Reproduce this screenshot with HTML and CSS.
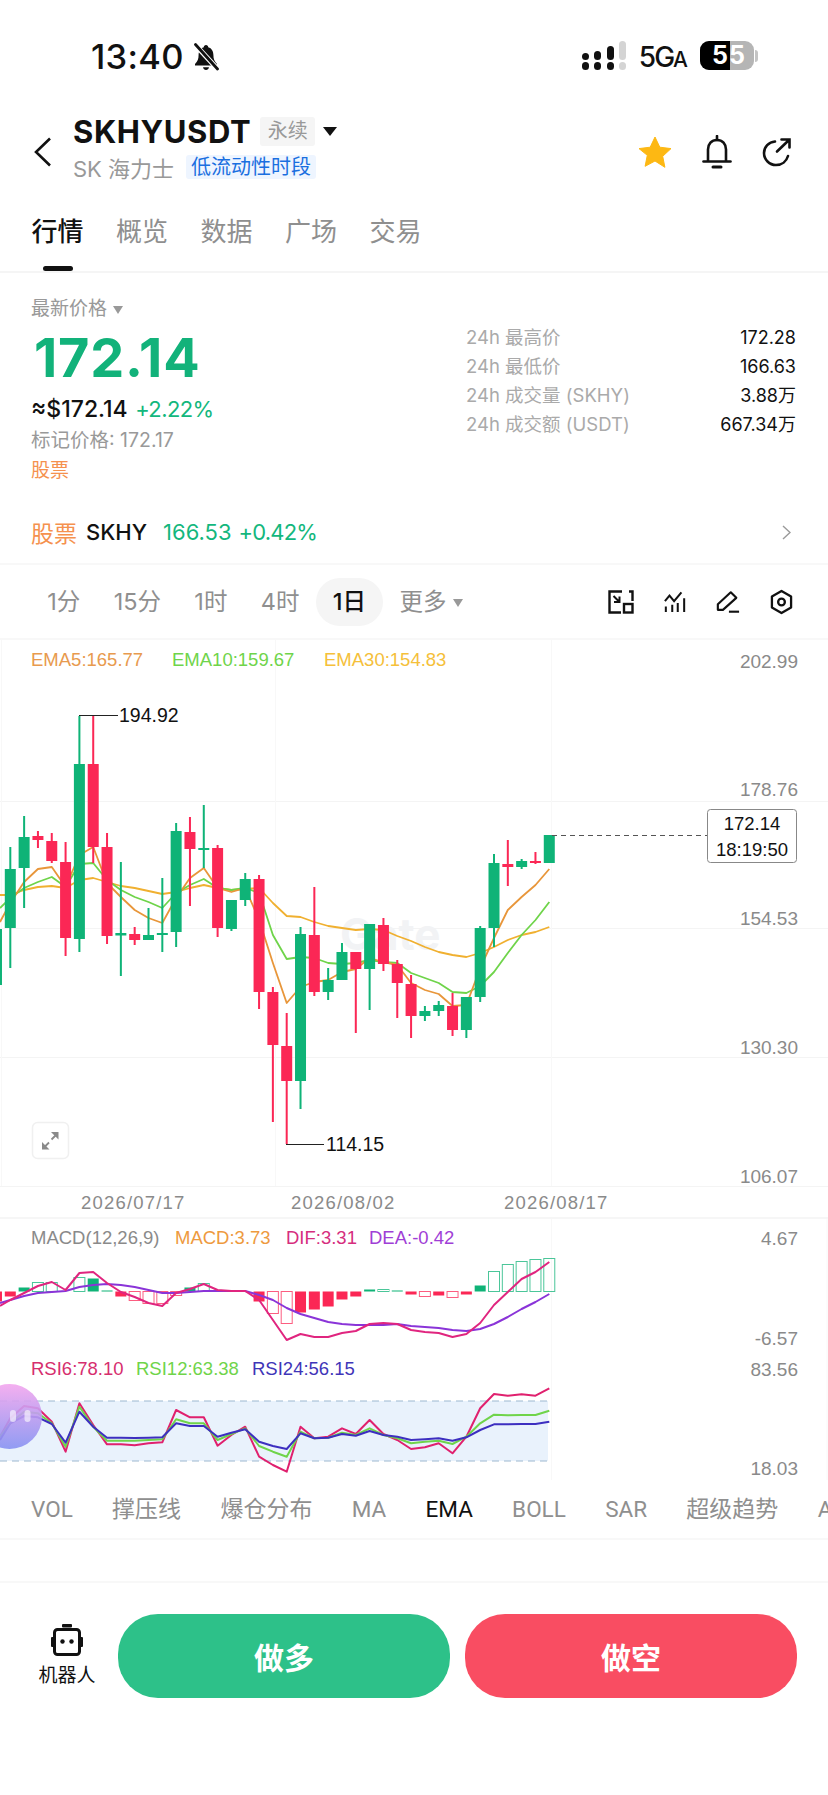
FILE: index.html
```html
<!DOCTYPE html>
<html lang="zh-CN">
<head>
    <meta charset="UTF-8">
    <meta name="viewport" content="width=device-width, initial-scale=1.0">
    <title>SKHYUSDT</title>
    <link rel="stylesheet" href="styles.css">
</head>
<body>
    <div class="status-bar">
        <div class="status-left">
            <span class="clock">13:40</span>
            <svg class="bell-off" viewBox="0 0 28 28" width="28" height="28">
                <path d="M14 2c-1.4 0-2.2 1-2.2 2.2C8.200 5.200 6.600 8.300 6.600 12c0 4-1 6-3.600 9v1.500h22V21c-2.600-3-3.600-5-3.600-9 0-3.700-1.600-6.800-5.200-7.800C16.200 3 15.400 2 14 2z" fill="#111"/>
                <path d="M11 24.200h6c-.4 1.700-1.500 2.800-3 2.800s-2.600-1.100-3-2.800z" fill="#111"/>
                <path d="M3 1.500 26 26.500" stroke="#fff" stroke-width="5"/>
                <path d="M3.500 1.500 25.500 26" stroke="#111" stroke-width="2.800" stroke-linecap="round"/>
            </svg>
        </div>
        <div class="status-right">
            <svg viewBox="0 0 44 29" width="44" height="29">
                <rect x="0" y="12" width="7" height="7" rx="3.500" fill="#111"/>
                <rect x="0" y="21" width="7" height="8" rx="3.500" fill="#111"/>
                <rect x="12" y="10" width="7" height="9" rx="3.500" fill="#111"/>
                <rect x="12" y="21" width="7" height="8" rx="3.500" fill="#111"/>
                <rect x="25" y="5" width="7" height="14" rx="3.500" fill="#111"/>
                <rect x="25" y="21" width="7" height="8" rx="3.500" fill="#111"/>
                <rect x="37" y="0" width="7" height="19" rx="3.500" fill="#d4d4d4"/>
                <rect x="37" y="21" width="7" height="8" rx="3.500" fill="#d4d4d4"/>
            </svg>
            <span class="network">5G<small>A</small></span>
            <div class="battery">
                <div class="battery-level"></div>
                <span class="battery-text">55</span>
            </div>
            <div class="battery-nub"></div>
        </div>
    </div>

    <div class="header">
        <svg class="back" viewBox="0 0 18 30" width="18" height="30">
            <path d="M16 1.500 2 15l14 13.500" fill="none" stroke="#111" stroke-width="2.600"/>
        </svg>
        <div class="symbol">
            <div class="symbol-top">
                <span class="symbol-name">SKHYUSDT</span>
                <span class="perp">永续</span>
                <span class="symbol-caret"></span>
            </div>
            <div class="symbol-sub">
                <span class="symbol-cn">SK 海力士</span>
                <span class="liquidity">低流动性时段</span>
            </div>
        </div>
        <div class="header-icons">
            <svg viewBox="0 0 34 32" width="34" height="32">
                <path d="M17 1l4.800 10.200 11.200 1.400-8.300 7.700 2.200 11L17 25l-9.900 5.300 2.200-11L1 12.600l11.200-1.400z" fill="#fdb813" stroke="#fdb813" stroke-linejoin="round"/>
            </svg>
            <svg viewBox="0 0 30 34" width="30" height="34">
                <path d="M6 26V14.500C6 9 9.500 5 15 5s9 4 9 9.500V26" fill="none" stroke="#111" stroke-width="2.600"/>
                <path d="M1.500 26.500h27" stroke="#111" stroke-width="2.600" stroke-linecap="round"/>
                <path d="M15 1v4" stroke="#111" stroke-width="2.600" stroke-linecap="round"/>
                <path d="M11 32h8" stroke="#111" stroke-width="3" stroke-linecap="round"/>
            </svg>
            <svg viewBox="0 0 30 30" width="30" height="30">
                <path d="M13 4.500C6.800 5 2 9.700 2 16c0 6.600 5.400 12 12 12 5.900 0 10.500-3.800 12-9" fill="none" stroke="#111" stroke-width="2.600" stroke-linecap="round"/>
                <path d="M15 14.500 27 3M19.500 2.500H27.500V10.500" fill="none" stroke="#111" stroke-width="2.600" stroke-linecap="round"/>
            </svg>
        </div>
    </div>

    <div class="tabs">
        <span class="tab active">行情</span>
        <span class="tab">概览</span>
        <span class="tab">数据</span>
        <span class="tab">广场</span>
        <span class="tab">交易</span>
    </div>

    <div class="ticker">
        <div class="ticker-left">
            <div class="last-label">最新价格<span class="small-caret"></span></div>
            <div class="last-price">172.14</div>
            <div class="fiat-row">
                <span class="fiat">≈$172.14</span>
                <span class="change">+2.22%</span>
            </div>
            <div class="mark">标记价格: 172.17</div>
            <div class="stock-tag">股票</div>
        </div>
        <div class="ticker-right">
            <div class="stat-row"><span>24h 最高价</span><b>172.28</b></div>
            <div class="stat-row"><span>24h 最低价</span><b>166.63</b></div>
            <div class="stat-row"><span>24h 成交量 (SKHY)</span><b>3.88万</b></div>
            <div class="stat-row"><span>24h 成交额 (USDT)</span><b>667.34万</b></div>
        </div>
    </div>

    <div class="related">
        <span class="related-tag">股票</span>
        <span class="related-name">SKHY</span>
        <span class="related-price">166.53</span>
        <span class="related-change">+0.42%</span>
        <svg class="related-arrow" viewBox="0 0 9 15" width="9" height="15">
            <path d="M1 1l7 6.500L1 14" fill="none" stroke="#9a9a9a" stroke-width="1.400"/>
        </svg>
    </div>

    <div class="intervals">
        <span class="interval">1分</span>
        <span class="interval">15分</span>
        <span class="interval">1时</span>
        <span class="interval">4时</span>
        <span class="interval active">1日</span>
        <span class="interval">更多<span class="small-caret"></span></span>
        <div class="tools">
            <svg viewBox="0 0 26 24" width="26" height="24">
                <path d="M14 1.500H1.500v21H13M21 1.500h3.500V11" fill="none" stroke="#111" stroke-width="2.400"/>
                <path d="M5.500 6l6 6M11.500 6.500V12H6" fill="none" stroke="#111" stroke-width="2"/>
                <rect x="16" y="14" width="8.500" height="8.500" fill="none" stroke="#111" stroke-width="2.400"/>
            </svg>
            <svg viewBox="0 0 24 24" width="22" height="24">
                <path d="M1 11 6 5l5 6L19 1.500" fill="none" stroke="#111" stroke-width="2.200"/>
                <path d="M2 17v6M9 15v8M15 13v10M22 8v15" stroke="#111" stroke-width="2.200"/>
            </svg>
            <svg viewBox="0 0 26 24" width="24" height="24">
                <path d="M16 1.500l6 6L7.500 20.500H2v-6z" fill="none" stroke="#111" stroke-width="2.300" stroke-linejoin="round"/>
                <path d="M14 22.500h11" stroke="#111" stroke-width="2.300"/>
            </svg>
            <svg viewBox="0 0 24 26" width="23" height="26">
                <path d="M12 1.500l10 5.700v11.600l-10 5.700-10-5.700V7.200z" fill="none" stroke="#111" stroke-width="2.400" stroke-linejoin="round"/>
                <circle cx="12" cy="13" r="3.500" fill="none" stroke="#111" stroke-width="2.400"/>
            </svg>
        </div>
    </div>

    <svg class="chart" viewBox="0 640 828 850" width="828" height="850">
        <defs>
            <linearGradient id="bubble" x1="0" y1="0" x2="0" y2="1">
                <stop offset="0" stop-color="#f3a6ee"/>
                <stop offset="1" stop-color="#8792f2"/>
            </linearGradient>
        </defs>

        <g class="grid">
            <path d="M0 801.500H828M0 928.500H828M0 1057.500H828M0 1186.500H828"/>
            <path class="grid-v" d="M1.500 640V1186M275.500 640V1186M551.500 640V1186M551.500 1218V1480M827 1218V1480"/>
        </g>
        <text class="watermark" x="340" y="950">Gate</text>

        <g id="emaLines"></g>
        <g id="candles"></g>

        <text class="legend ema5" x="31" y="666">EMA5:165.77</text>
        <text class="legend ema10" x="172" y="666">EMA10:159.67</text>
        <text class="legend ema30" x="324" y="666">EMA30:154.83</text>

        <path class="marker-line" d="M79 715.500H118M286 1144.500H324"/>
        <text class="marker" x="119" y="722">194.92</text>
        <text class="marker" x="326" y="1151">114.15</text>

        <path class="price-line" d="M552 835.500H707"/>
        <rect class="price-box" x="707.500" y="809.500" width="89" height="53" rx="3"/>
        <text class="price-box-text" x="752" y="830">172.14</text>
        <text class="price-box-text" x="752" y="856">18:19:50</text>

        <text class="axis" x="798" y="668">202.99</text>
        <text class="axis" x="798" y="796">178.76</text>
        <text class="axis" x="798" y="925">154.53</text>
        <text class="axis" x="798" y="1054">130.30</text>
        <text class="axis" x="798" y="1183">106.07</text>

        <rect class="expand" x="32.500" y="1122.500" width="36" height="36" rx="5"/>
        <path class="expand-icon" d="M42 1149.500v-7.500l7.500 7.500zM58.500 1132v7.500l-7.500-7.500z"/>
        <path class="expand-line" d="M44 1147.500l5-5M51.500 1139.500l5-5"/>

        <text class="date" x="81" y="1209">2026/07/17</text>
        <text class="date" x="291" y="1209">2026/08/02</text>
        <text class="date" x="504" y="1209">2026/08/17</text>
        <rect class="band-line" x="0" y="1217" width="828" height="2"/>

        <text class="legend macd-name" x="31" y="1244">MACD(12,26,9)</text>
        <text class="legend macd-val" x="175" y="1244">MACD:3.73</text>
        <text class="legend dif" x="286" y="1244">DIF:3.31</text>
        <text class="legend dea" x="369" y="1244">DEA:-0.42</text>
        <g id="macd"></g>

        <text class="legend rsi6" x="31" y="1375">RSI6:78.10</text>
        <text class="legend rsi12" x="136" y="1375">RSI12:63.38</text>
        <text class="legend rsi24" x="252" y="1375">RSI24:56.15</text>
        <rect class="rsi-band" x="0" y="1401" width="548" height="60"/>
        <path class="rsi-dash" d="M0 1401H548M0 1461H548"/>
        <g id="rsi"></g>

        <text class="axis" x="798" y="1245">4.67</text>
        <text class="axis" x="798" y="1345">-6.57</text>
        <text class="axis" x="798" y="1376">83.56</text>
        <text class="axis" x="798" y="1475">18.03</text>

        <circle class="bubble" cx="9.500" cy="1416.500" r="32.500"/>
        <rect class="bubble-bar" x="10" y="1410" width="6" height="12" rx="3"/>
        <rect class="bubble-bar" x="24.500" y="1410" width="6" height="12" rx="3"/>
    </svg>

    <div class="indicators">
        <span>VOL</span>
        <span class="cn">撑压线</span>
        <span class="cn">爆仓分布</span>
        <span>MA</span>
        <span class="active">EMA</span>
        <span>BOLL</span>
        <span>SAR</span>
        <span class="cn">超级趋势</span>
        <span>A</span>
    </div>

    <div class="spacer"></div>

    <div class="actions">
        <div class="robot">
            <svg viewBox="0 0 32 32" width="32" height="32">
                <rect x="11" y="0" width="10" height="3.500" rx="1" fill="#111"/>
                <rect x="3.500" y="5.500" width="25" height="25" rx="3" fill="none" stroke="#111" stroke-width="3"/>
                <rect x="0" y="13" width="3" height="10" rx="1" fill="#111"/>
                <rect x="29" y="13" width="3" height="10" rx="1" fill="#111"/>
                <circle cx="11.500" cy="17.500" r="2.200" fill="#111"/>
                <circle cx="20.500" cy="17.500" r="2.200" fill="#111"/>
            </svg>
            <span>机器人</span>
        </div>
        <button class="trade long">做多</button>
        <button class="trade short">做空</button>
    </div>

    <script src="chart.js"></script>
</body>
</html>
```

FILE: styles.css
```css
* {
    box-sizing: border-box;
}

body {
    margin: 0;
    width: 828px;
    height: 1795px;
    overflow: hidden;
    background-color: #fff;
    color: #111;
    font-family: "Inter", "Noto Sans CJK SC", sans-serif;
}

.status-bar {
    display: flex;
    justify-content: space-between;
    height: 108px;
    padding: 41px 70px 0 91px;
}

.status-left {
    display: flex;
    align-items: flex-start;
    gap: 8px;
}

.clock {
    font-size: 34.500px;
    font-weight: 500;
    line-height: 32px;
    letter-spacing: 0.300px;
}

.bell-off {
    margin-top: 2px;
}

.status-right {
    display: flex;
    align-items: flex-start;
    position: relative;
}

.network {
    margin-left: 13px;
    font-size: 28px;
    font-weight: 500;
    line-height: 32px;
    letter-spacing: -2px;
}

.network small {
    font-size: 21px;
}

.battery {
    position: relative;
    width: 54px;
    height: 29px;
    margin-left: 14px;
    border-radius: 9px;
    background-color: #b5b5b5;
    overflow: hidden;
}

.battery-level {
    width: 30px;
    height: 29px;
    background-color: #000;
}

.battery-text {
    position: absolute;
    left: 12px;
    top: 0;
    font-size: 25px;
    font-weight: 700;
    line-height: 29px;
    color: #fff;
    letter-spacing: 1px;
}

.battery-nub {
    width: 3px;
    height: 12px;
    margin: 9px 0 0 1px;
    border-radius: 0 3px 3px 0;
    background-color: #c4c4c4;
}

.header {
    display: flex;
    align-items: center;
    height: 78px;
    padding: 0 36px 0 34px;
}

.back {
    margin-top: 10px;
}

.symbol {
    margin-left: 21px;
}

.symbol-top {
    display: flex;
    align-items: center;
    height: 40px;
}

.symbol-name {
    font-size: 31px;
    font-weight: 700;
    letter-spacing: 0.600px;
}

.perp {
    margin-left: 9px;
    width: 55px;
    height: 29px;
    border-radius: 3px;
    background-color: #f5f5f5;
    color: #999;
    font-size: 20px;
    line-height: 29px;
    text-align: center;
}

.symbol-caret {
    margin-left: 8px;
    border-left: 7px solid transparent;
    border-right: 7px solid transparent;
    border-top: 9px solid #111;
}

.symbol-sub {
    display: flex;
    align-items: center;
    height: 32px;
}

.symbol-cn {
    width: 113px;
    color: #999;
    font-size: 22px;
}

.liquidity {
    height: 24px;
    padding: 0 5px;
    border-radius: 3px;
    background-color: #eef5ff;
    color: #1a6fe0;
    font-size: 20px;
    line-height: 24px;
}

.header-icons {
    display: flex;
    align-items: center;
    gap: 30px;
    margin-left: auto;
    margin-top: 10px;
}

.tabs {
    display: flex;
    gap: 32.500px;
    height: 87px;
    padding: 29px 0 0 31.500px;
    border-bottom: 2px solid #f5f5f5;
}

.tab {
    position: relative;
    height: 56px;
    color: #8f8f8f;
    font-size: 26px;
    line-height: 34px;
}

.tab.active {
    color: #111;
    font-weight: 500;
}

.tab.active::after {
    content: "";
    position: absolute;
    left: 11px;
    bottom: 0;
    width: 30px;
    height: 5px;
    border-radius: 3px;
    background-color: #111;
}

.ticker {
    display: flex;
    justify-content: space-between;
    padding: 25px 32px 0 31px;
}

.last-label {
    color: #999;
    font-size: 19px;
    line-height: 22px;
}

.small-caret {
    display: inline-block;
    margin-left: 6px;
    vertical-align: middle;
    border-left: 5.500px solid transparent;
    border-right: 5.500px solid transparent;
    border-top: 8px solid #999;
}

.last-price {
    margin-top: 8px;
    margin-left: 3px;
    color: #12b27a;
    font-size: 54px;
    font-weight: 700;
    line-height: 60px;
    letter-spacing: 0.800px;
}

.fiat-row {
    margin-top: 8px;
    font-size: 23px;
    line-height: 26px;
}

.fiat {
    font-weight: 500;
}

.change {
    margin-left: 1px;
    color: #13b77d;
    font-size: 22px;
    letter-spacing: -0.600px;
}

.mark {
    margin-top: 7px;
    color: #999;
    font-size: 19.500px;
    line-height: 22px;
}

.stock-tag {
    margin-top: 9px;
    color: #f5914e;
    font-size: 19px;
    line-height: 22px;
}

.ticker-right {
    width: 330px;
    padding-top: 25px;
}

.stat-row {
    display: flex;
    justify-content: space-between;
    height: 29px;
    color: #aaa;
    font-size: 18.500px;
    line-height: 29px;
}

.stat-row b {
    color: #111;
    font-size: 18px;
    font-weight: 400;
}

.related {
    display: flex;
    align-items: center;
    height: 40px;
    margin-top: 30px;
    padding: 0 37px 0 31px;
    font-size: 22px;
}

.related-tag {
    color: #f5914e;
    font-size: 23px;
}

.related-name {
    margin-left: 9px;
    font-weight: 500;
}

.related-price {
    margin-left: 16px;
    color: #13b77d;
}

.related-change {
    margin-left: 7px;
    color: #13b77d;
    letter-spacing: -0.800px;
}

.related-arrow {
    margin-left: auto;
}

.intervals {
    display: flex;
    align-items: center;
    height: 77px;
    margin-top: 11px;
    padding-left: 30.500px;
    border-top: 2px solid #f8f8f8;
    border-bottom: 2px solid #f8f8f8;
}

.interval {
    height: 48px;
    padding: 0 16.700px;
    border-radius: 24px;
    color: #8f8f8f;
    font-size: 23.500px;
    line-height: 48px;
    white-space: nowrap;
}

.interval.active {
    background-color: #f5f5f5;
    color: #111;
    font-weight: 500;
}

.tools {
    display: flex;
    align-items: center;
    gap: 30px;
    margin-left: auto;
    padding-right: 35px;
}

.chart {
    display: block;
}

.grid path {
    fill: none;
    stroke: #f4f4f4;
    stroke-width: 1;
}

.grid .grid-v {
    stroke: #f8f8f8;
}

.watermark {
    fill: #f2f3f5;
    font: 700 44px "Inter", sans-serif;
}

.legend,
.axis,
.date,
.marker,
.price-box-text {
    font-family: "Liberation Sans", sans-serif;
    font-size: 18.500px;
}

.ema5 { fill: #e89a4e; }
.ema10 { fill: #6fd44a; }
.ema30 { fill: #f5c03a; }
.macd-name { fill: #8a8a8a; }
.macd-val { fill: #ee9a3e; }
.dif { fill: #d62e7e; }
.dea { fill: #a03ed6; }
.rsi6 { fill: #d62e6e; }
.rsi12 { fill: #6fd44a; }
.rsi24 { fill: #3f35b8; }

.axis {
    fill: #8a8a8a;
    font-size: 19px;
    text-anchor: end;
}

.date {
    fill: #8a8a8a;
    letter-spacing: 1.200px;
}

.marker {
    fill: #111;
    font-size: 19.500px;
}

.marker-line {
    fill: none;
    stroke: #222;
    stroke-width: 1;
}

.price-line {
    fill: none;
    stroke: #555;
    stroke-width: 1;
    stroke-dasharray: 5 4;
}

.price-box {
    fill: #fff;
    stroke: #888;
    stroke-width: 1;
}

.price-box-text {
    fill: #111;
    text-anchor: middle;
}

.expand {
    fill: #fff;
    stroke: #f0f0f0;
    stroke-width: 1.500;
}

.expand-icon {
    fill: #8a8a8a;
}

.expand-line {
    fill: none;
    stroke: #8a8a8a;
    stroke-width: 1.800;
}

.band-line {
    fill: #f6f6f6;
}

.rsi-band {
    fill: #e9f2fc;
}

.rsi-dash {
    fill: none;
    stroke: #9db8d0;
    stroke-width: 1;
    stroke-dasharray: 7 5;
}

.bubble {
    fill: url(#bubble);
    opacity: 0.9;
}

.bubble-bar {
    fill: #fff;
    opacity: 0.6;
}

.indicators {
    display: flex;
    align-items: baseline;
    gap: 39.300px;
    height: 50px;
    padding-left: 31px;
    overflow: hidden;
    color: #8f8f8f;
    font-family: "Roboto", "Noto Sans CJK SC", sans-serif;
    font-size: 22.500px;
    line-height: 38px;
    white-space: nowrap;
    border-bottom: 2px solid #f8f8f8;
}

.indicators .cn {
    font-size: 23px;
}

.indicators .active {
    color: #111;
}

.spacer {
    height: 43px;
    border-bottom: 2px solid #f8f8f8;
}

.actions {
    display: flex;
    align-items: center;
    gap: 15px;
    padding: 31px 31px 0 0;
}

.robot {
    display: flex;
    flex-direction: column;
    align-items: center;
    flex: 0 0 103px;
    padding-left: 31px;
    font-size: 19px;
    line-height: 24px;
}

.robot span {
    margin-top: 8px;
}

.trade {
    flex: 1;
    height: 84px;
    border: none;
    border-radius: 40px;
    color: #fff;
    font-family: inherit;
    font-size: 30px;
    font-weight: 700;
}

.long {
    background-color: #2dc189;
}

.short {
    background-color: #f94d62;
}
```

FILE: chart.js
```js
const NS = 'http://www.w3.org/2000/svg';
const GREEN = '#0fb377';
const RED = '#fb2755';

// candle center for index i, -1 is the one cut off at the left edge
function cx(i) {
    return 10.3 + 13.82 * i;
}

function add(parent, tag, attrs) {
    const el = document.createElementNS(NS, tag);
    for (const key in attrs) {
        el.setAttribute(key, attrs[key]);
    }
    parent.appendChild(el);
    return el;
}

function line(parent, points, color, width) {
    add(parent, 'polyline', {
        points: points.map(p => p[0].toFixed(1) + ',' + p[1].toFixed(1)).join(' '),
        fill: 'none',
        stroke: color,
        'stroke-width': width,
        'stroke-linejoin': 'round'
    });
}

// y values start at x=0 and then follow the candle centers
function series(values) {
    return values.map((y, i) => [i === 0 ? 0 : cx(i - 1), y]);
}

// [color, wick top, body top, body bottom, wick bottom]
const candles = [
    ['g', 929, 929, 985, 985],
    ['g', 847, 869, 928, 968],
    ['g', 816, 837, 868, 908],
    ['r', 831, 836, 840, 848],
    ['r', 833, 841, 861, 863],
    ['r', 842, 862, 938, 956],
    ['g', 716, 764, 939, 952],
    ['r', 716, 764, 847, 863],
    ['r', 833, 847, 936, 944],
    ['g', 862, 933, 935.5, 976],
    ['r', 927, 934, 940, 945],
    ['g', 908, 935, 940, 940],
    ['g', 878, 933, 935, 952],
    ['g', 823, 831, 932, 947],
    ['r', 817, 832, 849, 906],
    ['g', 805, 848, 850, 868],
    ['r', 845, 848, 928, 937],
    ['g', 900, 900, 929, 931],
    ['g', 873, 879, 900, 906],
    ['r', 875, 879, 992, 1009],
    ['r', 987, 992, 1045, 1122],
    ['r', 1013, 1046, 1081, 1144],
    ['g', 927, 934, 1081, 1109],
    ['r', 887, 935, 992, 996],
    ['g', 968, 980, 992, 1000],
    ['g', 943, 952, 980, 980],
    ['r', 952, 952, 969, 1033],
    ['g', 924, 924, 969, 1010],
    ['r', 918, 925, 964, 971],
    ['r', 960, 964, 983, 1018],
    ['r', 975, 984, 1016, 1038],
    ['g', 1006, 1011, 1016, 1021],
    ['g', 1001, 1005, 1011, 1016],
    ['r', 993, 1006, 1030, 1036],
    ['g', 997, 997, 1030, 1038],
    ['g', 926, 928, 997, 1002],
    ['g', 854, 863, 928, 947],
    ['r', 840, 864, 867, 886],
    ['g', 859, 861, 867, 869],
    ['r', 852, 861, 863, 864],
    ['g', 835, 835, 863, 863]
];

const ema5 = [922, 903, 882, 869, 867, 887, 855, 847, 883, 897, 910, 918, 923, 898, 878, 868, 888, 892, 888, 920, 963, 1003, 987, 982, 980, 972, 969, 958, 962, 965, 983, 990, 994, 1006, 1005, 968, 938, 910, 897, 885, 869];
const ema10 = [908, 898, 888, 882, 877, 887, 864, 863, 880, 890, 897, 902, 908, 893, 885, 879, 888, 890, 888, 893, 935, 959, 957, 958, 963, 964, 963, 960, 962, 963, 973, 978, 983, 992, 993, 986, 972, 953, 935, 920, 902];
const ema30 = [895, 895, 890, 887, 886, 888, 880, 878, 882, 886, 888, 891, 894, 892, 888, 885, 888, 890, 889, 888, 903, 916, 917, 922, 926, 928, 930, 929, 930, 936, 941, 947, 952, 955, 957, 953, 947, 940, 935, 932, 927];

const dif = [1306, 1300, 1293, 1286, 1282, 1290, 1273, 1272, 1283, 1292, 1297, 1303, 1306, 1293, 1289, 1284, 1290, 1291, 1291, 1300, 1320, 1340, 1334, 1337, 1337, 1333, 1331, 1324, 1323, 1324, 1330, 1332, 1333, 1337, 1334, 1323, 1305, 1292, 1279, 1272, 1262];
const dea = [1303, 1300, 1296, 1293, 1292, 1291, 1287, 1285, 1284, 1285, 1287, 1290, 1293, 1293, 1292, 1291, 1291, 1291, 1291, 1295, 1300, 1308, 1314, 1318, 1322, 1324, 1325, 1325, 1325, 1324, 1326, 1327, 1328, 1330, 1331, 1329, 1324, 1317, 1309, 1302, 1294];

// bottom of the bar when below zero, top when above; hollow bars are weakening
const ZERO = 1291;
const macdBars = [
    [-1, 1301, 'r', 1], [0, 1296, 'r', 1], [1, 1287, 'g', 1], [2, 1282, 'g', 0], [3, 1282, 'g', 0],
    [5, 1277, 'g', 0], [6, 1278, 'g', 1], [7, 1290, 'g', 1], [8, 1296, 'r', 1], [9, 1300, 'r', 0],
    [10, 1303, 'r', 0], [11, 1303, 'r', 0], [12, 1295, 'r', 0], [13, 1287, 'g', 1], [14, 1283, 'g', 0],
    [18, 1301, 'r', 1], [19, 1313, 'r', 0], [20, 1323, 'r', 0], [21, 1312, 'r', 1], [22, 1309, 'r', 1],
    [23, 1306, 'r', 1], [24, 1299, 'r', 1], [25, 1296, 'r', 1], [26, 1289, 'g', 1], [27, 1289, 'g', 0],
    [28, 1290, 'g', 1], [29, 1294, 'r', 1], [30, 1296, 'r', 0], [31, 1295, 'r', 1], [32, 1297, 'r', 0],
    [33, 1294, 'r', 1], [34, 1285, 'g', 1], [35, 1271, 'g', 0], [36, 1264, 'g', 0], [37, 1261, 'g', 0],
    [38, 1259, 'g', 0], [39, 1258, 'g', 0]
];

// read off a 3x crop, so divide by 3 and add the crop top
const rsiRaw6 = [680, 625, 588, 595, 635, 725, 580, 645, 703, 703, 706, 700, 697, 600, 622, 622, 707, 675, 650, 740, 765, 785, 650, 685, 680, 655, 672, 630, 672, 690, 717, 712, 700, 730, 680, 595, 552, 557, 553, 557, 535];
const rsiRaw12 = [680, 640, 605, 610, 640, 710, 590, 650, 692, 692, 692, 690, 688, 628, 640, 640, 690, 672, 655, 708, 725, 740, 665, 685, 683, 668, 675, 655, 675, 685, 700, 695, 692, 702, 680, 640, 614, 616, 615, 615, 602];
const rsiRaw24 = [690, 640, 618, 622, 642, 698, 605, 650, 683, 683, 684, 683, 682, 640, 648, 648, 680, 668, 658, 695, 708, 717, 670, 685, 683, 672, 677, 663, 675, 680, 690, 688, 685, 692, 682, 660, 643, 643, 642, 642, 635];

function rsiPoints(raw) {
    // raw list has x=0 then 40 candles, the last at index 39
    return series(raw.map(v => 1210 + v / 3));
}

const emaLines = document.getElementById('emaLines');
line(emaLines, series(ema30), '#f0b030', 1.8);
line(emaLines, series(ema10), '#6fd44a', 1.8);
line(emaLines, series(ema5), '#e8963a', 1.8);

const candleGroup = document.getElementById('candles');
candles.forEach((c, n) => {
    const x = cx(n - 1);
    const color = c[0] === 'g' ? GREEN : RED;
    add(candleGroup, 'rect', { x: x - 1, y: c[1], width: 2, height: c[4] - c[1], fill: color });
    add(candleGroup, 'rect', { x: x - 5.5, y: c[2], width: 11, height: Math.max(c[3] - c[2], 2), fill: color });
});

const macd = document.getElementById('macd');
macdBars.forEach(b => {
    const color = b[2] === 'g' ? GREEN : RED;
    const top = Math.min(b[1], ZERO);
    const h = Math.abs(b[1] - ZERO);
    add(macd, 'rect', {
        x: cx(b[0]) - 5.5,
        y: top + 0.5,
        width: 11,
        height: h,
        fill: b[3] ? color : 'none',
        stroke: color,
        'stroke-width': b[3] ? 0 : 1,
        opacity: b[3] ? 1 : 0.75
    });
});
line(macd, series(dea), '#8a34d8', 2);
line(macd, series(dif), '#e0257f', 2);

const rsi = document.getElementById('rsi');
line(rsi, rsiPoints(rsiRaw6), '#e0206e', 2);
line(rsi, rsiPoints(rsiRaw12), '#6fd44a', 2);
line(rsi, rsiPoints(rsiRaw24), '#3d2fc0', 2);
```
